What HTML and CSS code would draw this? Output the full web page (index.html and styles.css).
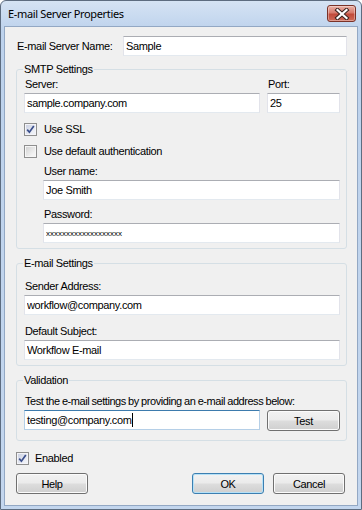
FILE: index.html
```html
<!DOCTYPE html>
<html lang="en">

<head>
    <meta charset="UTF-8">
    <meta name="viewport" content="width=device-width, initial-scale=1.0">
    <title>E-mail Server Properties</title>
    <link rel="stylesheet" href="styles.css">
</head>

<body>
    <div class="window">
        <div class="titlebar">
            <span class="title">E-mail Server Properties</span>
            <div class="close-btn">
                <svg width="16" height="12" viewBox="0 0 16 12">
                    <path d="M3.5 2 L12.5 10 M12.5 2 L3.5 10" stroke="#3b2420" stroke-width="4.2" stroke-linecap="square" />
                    <path d="M3.5 2 L12.5 10 M12.5 2 L3.5 10" stroke="#fff" stroke-width="2.2" stroke-linecap="square" />
                </svg>
            </div>
        </div>

        <div class="client">
            <div class="name-row">
                <label class="name-label">E-mail Server Name:</label>
                <input class="textbox name-input" type="text" value="Sample">
            </div>

            <fieldset class="group smtp">
                <legend>SMTP Settings</legend>
                <div class="pair-row">
                    <div class="field">
                        <label>Server:</label>
                        <input class="textbox" type="text" value="sample.company.com">
                    </div>
                    <div class="field">
                        <label>Port:</label>
                        <input class="textbox" type="text" value="25">
                    </div>
                </div>
                <div class="check-row ssl">
                    <span class="checkbox checked">
                        <svg width="9" height="9" viewBox="0 0 9 9">
                            <path d="M1.2 4.6 L3.4 7.2 L7.8 1" fill="none" stroke="#3b4f8c" stroke-width="1.7" />
                        </svg>
                    </span>
                    Use SSL
                </div>
                <div class="check-row auth">
                    <span class="checkbox"></span>
                    Use default authentication
                </div>
                <div class="auth-fields">
                    <div class="field">
                        <label>User name:</label>
                        <input class="textbox" type="text" value="Joe Smith">
                    </div>
                    <div class="field password">
                        <label>Password:</label>
                        <input class="textbox pw" type="text" value="xxxxxxxxxxxxxxxxxxx">
                    </div>
                </div>
            </fieldset>

            <fieldset class="group mail">
                <legend>E-mail Settings</legend>
                <div class="field">
                    <label>Sender Address:</label>
                    <input class="textbox" type="text" value="workflow@company.com">
                </div>
                <div class="field subject">
                    <label>Default Subject:</label>
                    <input class="textbox" type="text" value="Workflow E-mail">
                </div>
            </fieldset>

            <fieldset class="group validation">
                <legend>Validation</legend>
                <div class="hint">Test the e-mail settings by providing an e-mail address below:</div>
                <div class="pair-row test-row">
                    <div class="textbox focused">testing@company.com<span class="caret"></span></div>
                    <button class="btn">Test</button>
                </div>
            </fieldset>

            <div class="check-row enabled">
                <span class="checkbox checked">
                    <svg width="9" height="9" viewBox="0 0 9 9">
                        <path d="M1.2 4.6 L3.4 7.2 L7.8 1" fill="none" stroke="#3b4f8c" stroke-width="1.7" />
                    </svg>
                </span>
                Enabled
            </div>

            <div class="button-row">
                <button class="btn">Help</button>
                <div class="spacer"></div>
                <button class="btn default">OK</button>
                <button class="btn">Cancel</button>
            </div>
        </div>
    </div>
</body>

</html>
```

FILE: styles.css
```css
* {
    box-sizing: border-box;
    margin: 0;
    padding: 0;
}

body {
    background: #ffffff;
    font-family: 'Liberation Sans', Arial, sans-serif;
    font-size: 11px;
    letter-spacing: -0.35px;
    color: #000;
}

.window {
    width: 362px;
    height: 510px;
    border: 1px solid #5d6c80;
    border-radius: 6px 6px 0 0;
    background: linear-gradient(#d5e3f4, #bdd2ec 30px, #c3d6ee);
    padding: 0 3px 3px 3px;

    display: flex;
    flex-direction: column;
}

.titlebar {
    height: 25px;
    padding-left: 4px;

    display: flex;
    align-items: center;
    justify-content: space-between;
}

.title {
    font-family: 'Noto Sans', 'Open Sans', sans-serif;
    font-size: 11px;
    color: #000;
    margin-top: -1px;
}

.close-btn {
    width: 29px;
    height: 17px;
    align-self: flex-start;
    margin-top: 4px;
    margin-right: 2px;
    border: 1px solid #7a3228;
    border-radius: 3px;
    background: linear-gradient(#e9b1a6, #d77a6c 45%, #c14a3a 55%, #cf6a58);
    box-shadow: inset 0 0 0 1px rgba(255, 255, 255, 0.35);

    display: flex;
    align-items: center;
    justify-content: center;
}

.client {
    flex: 1;
    background: #f0f0f0;
    border: 1px solid #93a8c4;
    padding: 9px 10px 0 11px;
}

.name-row {
    display: flex;
    align-items: center;
}

.name-label {
    width: 107px;
    padding-left: 1px;
}

.name-input {
    flex: 1;
}

.textbox {
    height: 20px;
    width: 100%;
    display: block;
    padding: 0 2px;
    border: 1px solid #e2e3ea;
    border-top-color: #abadb3;
    border-bottom-color: #e3e9ef;
    background: #fff;
    font-family: 'Liberation Sans', Arial, sans-serif;
    font-size: 11px;
    letter-spacing: -0.35px;
    color: #000;
    outline: none;
    line-height: 18px;
}

.textbox.pw {
    font-size: 8px;
    letter-spacing: 0;
}

.textbox.focused {
    border-color: #b5cfe7;
    border-top-color: #3d7bad;
}

.caret {
    display: inline-block;
    width: 1px;
    height: 14px;
    background: #000;
    vertical-align: middle;
    margin-top: -2px;
}

.group {
    margin-top: 7px;
    padding: 2px 6px 5px 7px;
    border: 1px solid #d5dfe5;
    border-radius: 3px;
    min-width: 0;
}

.group legend {
    padding: 0 1px;
    margin-left: -1px;
    line-height: 13px;
}

.field label {
    display: block;
    line-height: 13px;
    padding-left: 1px;
    margin-bottom: 2px;
}

.pair-row {
    display: grid;
    grid-template-columns: 1fr 73px;
    gap: 7px;
}

.check-row {
    height: 13px;
    line-height: 13px;

    display: flex;
    align-items: center;
}

.check-row.ssl {
    margin-top: 10px;
}

.check-row.auth {
    margin-top: 9px;
}

.checkbox {
    width: 13px;
    height: 13px;
    margin-right: 7px;
    border: 1px solid #8f8f8f;
    background: linear-gradient(135deg, #cfcfcf, #f3f3f3 75%);
    box-shadow: inset 0 0 0 1px #f6f6f6;

    display: flex;
    align-items: center;
    justify-content: center;
}

.checkbox.checked {
    background: linear-gradient(135deg, #c8cee0, #eef0f6 75%);
    box-shadow: inset 0 0 0 1px #f4f4f8;
}

.auth-fields {
    margin-left: 19px;
}

.auth-fields .field {
    margin-top: 7px;
}

.auth-fields .field.password {
    margin-top: 8px;
}

.group.mail {
    margin-top: 8px;
    padding-top: 10px;
}

.field.subject {
    margin-top: 10px;
}

.group.validation {
    margin-top: 8px;
    padding-top: 8px;
    padding-bottom: 9px;
}

.hint {
    line-height: 13px;
    padding-left: 1px;
    letter-spacing: -0.45px;
    word-spacing: -0.3px;
}

.test-row {
    margin-top: 2px;
}

.btn {
    height: 21px;
    border: 1px solid #707070;
    border-radius: 3px;
    background: linear-gradient(#f2f2f2, #ebebeb 48%, #dddddd 52%, #cfcfcf);
    box-shadow: inset 0 0 0 1px #fbfbfb;
    font-family: 'Liberation Sans', Arial, sans-serif;
    font-size: 11px;
    letter-spacing: -0.35px;
    color: #000;
}

.btn.default {
    border-color: #3c7fb1;
    box-shadow: inset 0 0 0 1px #b6e1f7;
}

.check-row.enabled {
    margin-top: 11px;
}

.check-row.enabled .checkbox {
    margin-right: 6px;
}

.button-row {
    margin-top: 8px;
    margin-right: 2px;

    display: flex;
    gap: 9px;
}

.button-row .btn {
    width: 72px;
}

.spacer {
    flex: 1;
}
```
